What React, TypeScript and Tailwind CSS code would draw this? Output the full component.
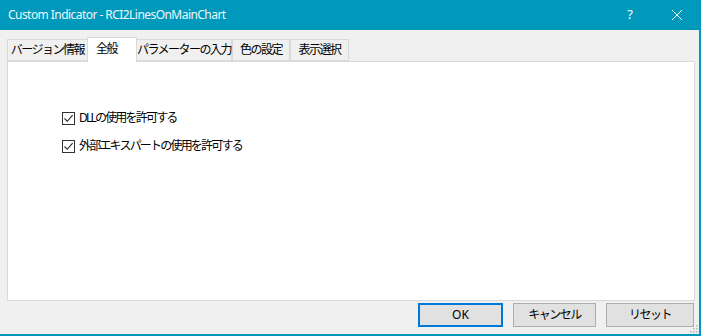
const font = "font-['Noto_Sans','Noto_Sans_CJK_JP',sans-serif]";
const jp = "tracking-[-1.5px] whitespace-nowrap";

function Check({ label }: { label: string }) {
  return (
    <label className="flex items-center gap-[4px] h-[14px] text-[12px] text-black">
      <span className="w-[13px] h-[13px] border border-[#333] bg-white flex items-center justify-center shrink-0">
        <svg width="11" height="11" viewBox="0 0 11 11">
          <path d="M1.5 5.5 L4.3 8.3 L9.6 2.2" fill="none" stroke="#222" strokeWidth="1.1" />
        </svg>
      </span>
      <span className="leading-none tracking-[-1.8px] whitespace-nowrap">{label}</span>
    </label>
  );
}

const tabs = ["バージョン情報", "全般", "パラメーターの入力", "色の設定", "表示選択"];
const widths = ["w-[80px]", "w-[50px]", "w-[95px]", "w-[58px]", "w-[59px]"];

export default function App() {
  return (
    <div className={`w-[701px] h-[336px] bg-[#f0f0f0] flex flex-col border-r-2 border-b-2 border-[#0099bc] ${font}`}>
      <div className="h-[30px] bg-[#0099bc] flex items-center pl-[8px] text-white shrink-0">
        <span className="text-[12px] tracking-[-0.55px] text-[#eaf7fb]">Custom Indicator - RCI2LinesOnMainChart</span>
        <span className="ml-auto text-[13px] mr-[38px]">?</span>
        <svg width="12" height="12" viewBox="0 0 12 12" className="mr-[16px]">
          <path d="M1 1 L11 11 M11 1 L1 11" stroke="white" strokeWidth="1" />
        </svg>
      </div>
      <div className="flex pl-[7px] pt-[6px] h-[31px] items-end shrink-0">
        {tabs.map((t, i) =>
          i === 1 ? (
            <div
              key={t}
              className={`${widths[i]} h-[25px] bg-white border border-b-0 border-[#d9d9d9] text-[12px] flex items-start pt-[2px] pl-[8px] relative z-10 -mb-px ${jp}`}
            >
              {t}
            </div>
          ) : (
            <div
              key={t}
              className={`${widths[i]} h-[22px] bg-[#f0f0f0] border border-[#d9d9d9] ${i === 2 ? "border-l-0" : ""} ${i === 0 ? "border-r-0" : ""} text-[12px] flex items-center justify-center ${jp}`}
            >
              {t}
            </div>
          )
        )}
      </div>
      <div className="ml-[7px] mr-[4px] h-[240px] bg-white border border-[#d9d9d9] shrink-0 flex flex-col gap-[14px] pt-[49px] pl-[54px]">
        <Check label="DLLの使用を許可する" />
        <Check label="外部エキスパートの使用を許可する" />
      </div>
      <div className="flex justify-end gap-[10px] pr-[5px] pt-[2px] relative flex-1">
        <button className="w-[85px] h-[24px] bg-[#e1e1e1] border-2 border-[#0078d7] text-[12px]">OK</button>
        <button className={`w-[83px] h-[24px] bg-[#e1e1e1] border border-[#adadad] text-[12px] ${jp}`}>キャンセル</button>
        <button className={`w-[88px] h-[24px] bg-[#e1e1e1] border border-[#adadad] text-[12px] ${jp}`}>リセット</button>
        <svg width="8" height="8" viewBox="0 0 8 8" className="absolute right-[1px] bottom-[1px]">
          <g fill="#b8b8b8">
            <rect x="6" y="0" width="1.5" height="1.5" />
            <rect x="3" y="3" width="1.5" height="1.5" />
            <rect x="6" y="3" width="1.5" height="1.5" />
            <rect x="0" y="6" width="1.5" height="1.5" />
            <rect x="3" y="6" width="1.5" height="1.5" />
            <rect x="6" y="6" width="1.5" height="1.5" />
          </g>
        </svg>
      </div>
    </div>
  );
}
